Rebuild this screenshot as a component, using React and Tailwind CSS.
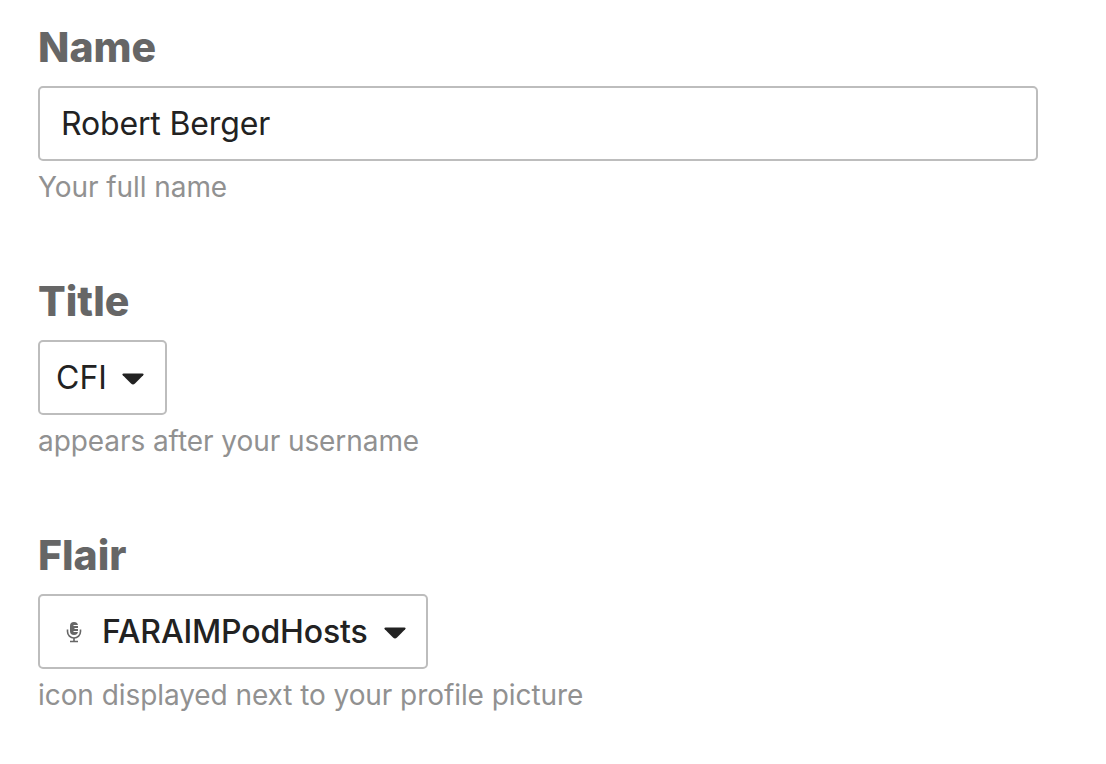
import React from 'react';

function Caret() {
  return (
    <svg width="24" height="14" viewBox="0 0 24 14" className="mt-[2px] shrink-0 text-[#222]">
      <path d="M2.5 1.5 H21.5 Q23.4 1.5 22.2 3.2 L14 11.6 Q12 13.4 10 11.6 L1.8 3.2 Q0.6 1.5 2.5 1.5 Z" fill="currentColor" />
    </svg>
  );
}

function Mic() {
  return (
    <svg width="16" height="22" viewBox="0 0 16 22" className="shrink-0 text-[#666]">
      <rect x="4" y="1" width="8" height="13" rx="4" fill="currentColor" />
      <path d="M7.5 4.5H12M8.5 7.5H12M7.5 10.5H12" stroke="#fff" strokeWidth="1" />
      <path d="M1.5 8.5v2a6.5 6.5 0 0 0 13 0v-2" fill="none" stroke="currentColor" strokeWidth="1.6" />
      <path d="M8 17v3M4 20.5h8" stroke="currentColor" strokeWidth="1.6" />
    </svg>
  );
}

function Field({ label, hint, children }) {
  return (
    <div className="mb-[68px]">
      <h2 className="mb-[15px] text-[41px] leading-[48px] font-extrabold text-[#666666]">{label}</h2>
      {children}
      <p className="mt-[4px] text-[28px] leading-[44px] tracking-[-0.07px] text-[#919191]">{hint}</p>
    </div>
  );
}

export default function App() {
  return (
    <div className="min-h-screen bg-white pt-[23px] pl-[38px] font-['Inter',sans-serif] text-[#222]">
      <Field label="Name" hint="Your full name">
        <div className="flex h-[75px] w-[1000px] items-center rounded-[5px] border-2 border-[#bdbdbd] pl-[21px] text-[32px] tracking-[-0.15px]">
          Robert Berger
        </div>
      </Field>
      <Field label="Title" hint="appears after your username">
        <div className="flex h-[75px] w-[129px] items-center gap-[14px] rounded-[5px] border-2 border-[#bdbdbd] pl-[16px] text-[32px]">
          CFI
          <Caret />
        </div>
      </Field>
      <Field label="Flair" hint="icon displayed next to your profile picture">
        <div className="flex h-[75px] w-[390px] items-center rounded-[5px] border-2 border-[#bdbdbd] pl-[26px] text-[32px] font-medium tracking-[-0.15px]">
          <Mic />
          <span className="mr-[15px] ml-[20px]">FARAIMPodHosts</span>
          <Caret />
        </div>
      </Field>
    </div>
  );
}
